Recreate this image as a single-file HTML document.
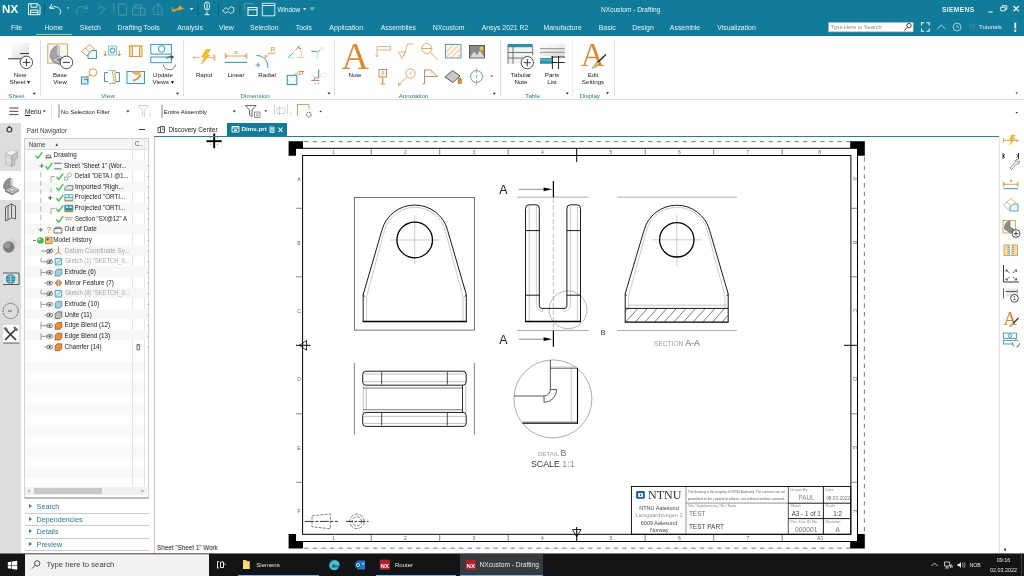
<!DOCTYPE html>
<html>
<head>
<meta charset="utf-8">
<title>NXcustom - Drafting</title>
<style>
html,body{margin:0;padding:0;}
#hdr,#ribbon,#selbar,#nav,#task,#tabs,#gfx,#topicons{will-change:transform;}
body{width:1024px;height:576px;overflow:hidden;background:#fefefe;font-family:"Liberation Sans",sans-serif;font-size:7px;color:#222;position:relative;}
.abs{position:absolute;}
#hdr{left:0;top:0;width:1024px;height:36px;background:#107c9a;}
#hdr .t{position:absolute;color:#e9f3f5;font-size:6.900px;white-space:nowrap;line-height:9px;}
#hdr .m{top:23.300px;transform:translateX(-50%);}
#ribbon{left:0;top:36px;width:1024px;height:63px;background:#fefefe;border-bottom:1px solid #d9dde0;}
#ribbon .l{position:absolute;margin-top:-1px;font-size:6.200px;color:#1c1c1c;white-space:nowrap;text-align:center;line-height:7px;}
#ribbon .g{position:absolute;font-size:6.200px;color:#257b90;white-space:nowrap;line-height:7px;}
#ribbon .sep{position:absolute;top:4px;width:1px;height:56px;background:#dcdfe2;}
#selbar{left:0;top:100px;width:1024px;height:23px;background:#fefefe;}
#selbar .t{position:absolute;font-size:6.6px;color:#222;white-space:nowrap;line-height:8px;}
#side{left:0;top:123px;width:21px;height:431px;background:#dcdddd;}
#nav{left:21px;top:123px;width:130px;height:431px;background:#fefefe;}
#gap{left:154.200px;top:136px;width:0.800px;height:418px;background:#c6c8c9;}
#nav .r{position:absolute;left:0;font-size:6.3px;color:#1c1c1c;white-space:nowrap;line-height:8px;}
#nav .gr{color:#a3a6a9;}
#task{left:0;top:554px;width:1024px;height:22px;background:#131416;}
#task .t{position:absolute;color:#e8e8e8;font-size:6.6px;white-space:nowrap;line-height:8px;}
</style>
</head>
<body>
<!-- HEADER -->
<div id="hdr" class="abs">
  <div class="t" style="left:2px;top:3px;font-size:11.5px;font-weight:bold;line-height:12px;color:#fff;letter-spacing:.3px;">NX</div>
  <div class="t" style="left:277.400px;top:4.600px;font-size:6.400px;">Window</div>
  <div class="t" style="left:601px;top:4.800px;font-size:6.600px;">NXcustom - Drafting</div>
  <div class="t" style="left:942px;top:5.200px;font-size:6.600px;font-weight:bold;letter-spacing:.4px;">SIEMENS</div>
  <div class="t m" style="left:16.6px;">File</div>
  <div class="t m" style="left:53.6px;">Home</div>
  <div class="t m" style="left:90.4px;">Sketch</div>
  <div class="t m" style="left:138.6px;">Drafting Tools</div>
  <div class="t m" style="left:190.0px;">Analysis</div>
  <div class="t m" style="left:226.4px;">View</div>
  <div class="t m" style="left:264.3px;">Selection</div>
  <div class="t m" style="left:303.8px;">Tools</div>
  <div class="t m" style="left:346.2px;">Application</div>
  <div class="t m" style="left:398.3px;">Assemblies</div>
  <div class="t m" style="left:448.6px;">NXcustom</div>
  <div class="t m" style="left:505.0px;">Ansys 2021 R2</div>
  <div class="t m" style="left:562.6px;">Manufacture</div>
  <div class="t m" style="left:607.2px;">Basic</div>
  <div class="t m" style="left:643.0px;">Design</div>
  <div class="t m" style="left:685.0px;">Assemble</div>
  <div class="t m" style="left:736.5px;">Visualization</div>
  <div class="t" style="left:979px;top:23px;font-size:6px;">Tutorials</div>
  <div class="abs" style="left:36px;top:33.700px;width:36px;height:1.200px;background:#a9cd72;"></div>
</div>

<!-- RIBBON -->
<div id="ribbon" class="abs">
  <div class="sep" style="left:40px;"></div>
  <div class="sep" style="left:183px;"></div>
  <div class="sep" style="left:334px;"></div>
  <div class="sep" style="left:500px;"></div>
  <div class="sep" style="left:572px;background:#eceef0;"></div>
  <div class="sep" style="left:613.500px;"></div>
  <div class="l" style="left:8px;top:36px;width:24px;">New<br>Sheet ▾</div>
  <div class="l" style="left:48px;top:36px;width:24px;">Base<br>View</div>
  <div class="l" style="left:148px;top:36px;width:30px;">Update<br>Views ▾</div>
  <div class="l" style="left:192px;top:36px;width:24px;">Rapid</div>
  <div class="l" style="left:224px;top:36px;width:24px;">Linear</div>
  <div class="l" style="left:255px;top:36px;width:24px;">Radial</div>
  <div class="l" style="left:343px;top:36px;width:24px;">Note</div>
  <div class="l" style="left:506px;top:36px;width:30px;">Tabular<br>Note</div>
  <div class="l" style="left:540px;top:36px;width:24px;">Parts<br>List</div>
  <div class="l" style="left:578px;top:36px;width:30px;">Edit<br>Settings</div>
  <div class="g" style="left:16.4px;top:55.800px;transform:translateX(-50%);">Sheet</div>
  <div class="g" style="left:108.0px;top:55.800px;transform:translateX(-50%);">View</div>
  <div class="g" style="left:255.2px;top:55.800px;transform:translateX(-50%);">Dimension</div>
  <div class="g" style="left:413.5px;top:55.800px;transform:translateX(-50%);">Annotation</div>
  <div class="g" style="left:532.7px;top:55.800px;transform:translateX(-50%);">Table</div>
  <div class="g" style="left:589.8px;top:55.800px;transform:translateX(-50%);">Display</div>
</div>

<!-- SELECTION BAR -->
<div id="selbar" class="abs">
  <div class="t" style="left:24.900px;top:7.500px;"><span style="text-decoration:underline;">M</span>enu</div>
  <div class="t" style="left:60.800px;top:7.500px;font-size:6px;">No Selection Filter</div>
  <div class="t" style="left:163.800px;top:7.500px;font-size:6px;">Entire Assembly</div>
</div>

<!--TOP-->
<svg id="topicons" class="abs" style="left:0;top:0;" width="1024" height="124" viewBox="0 0 1024 124" font-family="Liberation Sans, sans-serif">
<!-- quick access -->
<g fill="none" stroke="#f2f8f9" stroke-width="1">
<path d="M28.500 3.700h9l2.500 2.500v8.500h-11.500z"/><path d="M31 3.700v3.500h6v-3.500M30.500 14.500v-4.500h7.500v4.500M30.500 12.300h7.500"/>
<path d="M52 3.800l-2.500 4.300 4.800.7M49.700 8.100c5-3 10-1 11 3 .3 1.500-.5 2.700-1.500 3.500" stroke-width="0.900"/>
<path d="M207 3.500v5.500M204.500 4.500v3a2.500 2.500 0 0 0 5 0v-3a2.500 2.500 0 0 0-5 0zM207 11.500v3M204.500 14.700h5" stroke-width="1"/>
<path d="M222.500 11l3-3.500 3 2 2-3 3.500 1.500-.5 4-3 1.500-2-2-3 1.500z" stroke-width="0.800"/>
<path d="M248 7.500h9v8h-9zM248 9.700h9" stroke-width="1.100"/><path d="M244.500 10v-6.500h8.500v2" stroke="#5d9fb0" stroke-width="0.800"/>
<path d="M262.300 3.300h12.500v12.500h-12.500zM262.300 5.500h12.500" stroke-width="0.900"/>
</g>
<path d="M44.300 3v13M197.800 3v13M218.500 3v13M240 3v13" stroke="#13596a" stroke-width="0.800"/>
<path d="M66.800 7.500h2.400l-1.200 1.500zM189.800 8h3.600l-1.800 2.200zM303 8h3.400l-1.700 2.200z" fill="#e9f3f5"/>
<path d="M310.500 7.800h3.400l-1.700 2.400z" fill="none" stroke="#e9f3f5" stroke-width="0.600"/>
<g fill="none" stroke="#4b98a9" stroke-width="1">
<path d="M86.500 4.500l1 4-4 .5M86.500 8c-4-3-9-1-10 3-.3 1.500.5 2.700 1.500 3.500"/>
<path d="M98 9l4-3 2 4 3.500-3M101 14l2-4"/>
<path d="M114 3v10M118.500 4h5.500l2.500 2.500v8.500h-8z"/>
<path d="M132.500 8v7h8v-7zM134.500 8v-3h6.500v3M141 8h4v7h-4.500"/>
<path d="M158 3v12M153 8l5-4.500 4 5.500v5.500h-8z" stroke-width="0.900"/>
</g>
<path d="M172.300 9.500l5-1 3-3.500 1.500 2.500 2.500.5-3 2-5 .5-2.500 1.500z" fill="#e29a2b"/><path d="M172.300 7v5" stroke="#e29a2b" stroke-width="0.900"/>
<!-- header right -->
<rect x="828.400" y="22.300" width="84.800" height="9.600" fill="#fefefe" stroke="#9aa6ab" stroke-width="0.600"/>
<text x="830.400" y="29" font-size="5.600" fill="#8a8f92">Type Here to Search</text>
<g fill="none" stroke="#333" stroke-width="0.900"><circle cx="909" cy="25.600" r="2.200"/><path d="M907.400 27.300l-3 3.300"/></g>
<g fill="none" stroke="#eef6f7" stroke-width="1">
<path d="M921.500 25.500v-2.700h2.700M926.500 22.800h2.700v2.700M929.200 28.500v2.700h-2.700M924.200 31.200h-2.700v-2.700" stroke-width="1.100"/>
<path d="M937.300 29l4-3.800 4 3.800" stroke="#b9d6dc" stroke-width="0.900"/>
<circle cx="957" cy="27" r="3.900" stroke="#cfe3e7" stroke-width="0.800"/><path d="M957 24.800v2.400h1.800" stroke="#cfe3e7" stroke-width="0.700"/>
<path d="M969.500 25.500l3-1.500 3 1.500-3 1.500zM970.500 27v2l2 1 2-1v-2" stroke="#3c8b9d" stroke-width="0.800"/>
<path d="M988.500 12h4.200" stroke-width="1.100"/>
<path d="M1000.700 7.300h4.500v3.500h-4.500zM1002.200 7.300v-1.600h4.600v3.600h-1.600" stroke-width="0.900"/>
<path d="M1013.500 6l5.400 5.400M1018.900 6l-5.400 5.400" stroke-width="1.300"/>
</g>
<path d="M1014.400 22.800h1.800v5.600h-1.800zM1014.400 29.800h1.800v2.100h-1.800z" fill="#fefefe"/>

<!-- RIBBON ICONS -->
<!-- New Sheet -->
<defs><linearGradient id="gsh" x1="0" y1="0" x2="1" y2="1"><stop offset="0" stop-color="#fefefe"/><stop offset="1" stop-color="#dcdcdc"/></linearGradient></defs>
<rect x="12" y="43" width="17" height="15.500" fill="url(#gsh)"/>
<path d="M8 58.800h13.500M20 53.500h9" stroke="#222" stroke-width="0.900"/>
<circle cx="26.400" cy="62.400" r="6.200" fill="#fefefe" stroke="#222" stroke-width="0.800"/><path d="M22.800 62.400h7.200M26.400 58.800v7.200" stroke="#222" stroke-width="0.900"/>
<!-- Base View -->
<rect x="47.800" y="43.900" width="19.800" height="19.300" fill="#fbf7ef" stroke="#c99a4a" stroke-width="0.800"/>
<path d="M50 57.500c0-6.500 2.800-11 7.500-12l2 1v9.500l-7.500 4z" fill="#a6a6a6" stroke="#6e6e6e" stroke-width="0.500"/><path d="M57.500 45.500l2 1v9.500l-2-1z" fill="#d9d9d9"/><path d="M52 60l7.500-4 7 3.500-7.500 4z" fill="#cdcdcd" stroke="#777" stroke-width="0.500"/><path d="M52 60l7 3.500v1.600l-7-3.500z" fill="#8a8a8a"/><path d="M59 63.500l7.500-4v1.600l-7.500 4z" fill="#9d9d9d"/><ellipse cx="59.600" cy="59.800" rx="2.600" ry="1.400" fill="#8c8c8c" stroke="#666" stroke-width="0.400"/>
<circle cx="66.400" cy="62.400" r="6.300" fill="#fefefe" stroke="#222" stroke-width="0.800"/><path d="M62.800 62.400h7.200" stroke="#222" stroke-width="0.900"/>
<!-- small view icons -->
<g fill="none" stroke-width="0.900">
<path d="M81.500 51.500l8-7 5 4.500-7.500 7z" stroke="#d9933d"/><path d="M85 48l5 4.500" stroke="#d9933d"/><path d="M88 58.500v-4.500l4-3.500h4.500v8z" stroke="#2f8fa6" fill="#eef8fa"/>
<rect x="108.500" y="46" width="8" height="9" stroke="#6fc3d4" fill="#eef8fa"/><circle cx="112.500" cy="50.500" r="2.400" stroke="#2f8fa6"/><path d="M105.300 50.800v5M119.300 50.800v5M104 54l1.300 2 1.300-2M118 54l1.300 2 1.300-2" stroke="#c98744"/>
<rect x="129.500" y="46" width="12.500" height="10.500" stroke="#d9933d" fill="#f5dcae"/><path d="M134 46v10.500M138 46v10.500" stroke="#fefefe" stroke-width="3.400"/><path d="M129.500 46h12.500M129.500 56.500h12.500M132.500 46v10.500M139.500 46v10.500" stroke="#d9933d"/>
<rect x="81.500" y="77" width="6.500" height="7" stroke="#2f8fa6" fill="#c9edf3"/><circle cx="93" cy="72.500" r="3.800" stroke="#d9933d"/><path d="M85 78l5.500-3.500" stroke="#d9933d"/><path d="M84 79.500h3.500v2" stroke="#2f8fa6"/>
<path d="M108 72.500h-3.500v9h3.500M116 72.500h3.500v9h-3.500" stroke="#2f8fa6"/><path d="M109 70.500h6.500M109 83.500h6.500" stroke="#6fc3d4"/><path d="M113.500 70.500c-3 4 3 8-1 13M116 71c-3 4 2 8-1.500 12.500" stroke="#d9933d"/>
<rect x="127" y="71.500" width="17.500" height="12" stroke="#2f8fa6" fill="#eef8fa"/><path d="M132 71.500a5 5 0 0 0 9 0z" fill="#e9b674" stroke="#d9933d"/><path d="M133 80.500c3-.5 6-2 7.500-6" stroke="#d9933d" stroke-width="1.800"/>
</g>
<!-- Update Views -->
<g fill="none" stroke="#2f8fa6" stroke-width="0.900">
<rect x="150.800" y="44.400" width="20.600" height="9.700" fill="#f3fbfc"/><rect x="150.800" y="57" width="20.600" height="5.700" fill="#f3fbfc"/><circle cx="161.600" cy="49" r="3.300"/>
</g>
<path d="M163.200 64.500a6.300 6.300 0 0 0 12.400 0" fill="none" stroke="#444" stroke-width="0.700"/><path d="M166.500 58.500c2-1.800 4.500-2.200 6.500-1.500" fill="none" stroke="#222" stroke-width="0.900"/><path d="M170.500 55.200l3 1.800-2.800 1.800" fill="none" stroke="#222" stroke-width="0.900"/>
<!-- Rapid -->
<path d="M206 49.500h4.500l-3.500 5.500h3l-8.500 9 3-7h-3z" fill="#ecc12e" stroke="#d9a11e" stroke-width="0.500"/>
<path d="M193.500 57.500h6M208 57.500h6.500M194.800 55.800l-1.700 1.700 1.700 1.700M213 54.800l1.800 2.700-1.800 2.700M214.800 54v7" fill="none" stroke="#e0a25c" stroke-width="0.800"/>
<!-- Linear -->
<path d="M225.300 56h21.500M225.300 53v6M246.800 53v6M227.300 54.300l-1.700 1.700 1.700 1.700M244.800 54.300l1.700 1.700-1.700 1.700M234.500 51l3 3M237.500 51l-3 3" fill="none" stroke="#d9933d" stroke-width="0.800"/>
<path d="M225 62.400h22" stroke="#2f8fa6" stroke-width="1"/>
<!-- Radial -->
<path d="M256.500 55.500c7 0 11.500 5 11.500 12.500" fill="none" stroke="#2f8fa6" stroke-width="0.900"/><path d="M255.500 65h5M258 62.500v5" stroke="#2f8fa6" stroke-width="0.800"/>
<path d="M275.500 53.300h-6.500l-4 4M265 54.800v2.500h2.500" fill="none" stroke="#d9933d" stroke-width="0.800"/>
<text x="270.500" y="52.200" font-size="7" fill="#d9933d">R</text>
<!-- small dimension icons -->
<g fill="none" stroke-width="0.800">
<path d="M287.900 57.800l5.600-5.200" stroke="#2f8fa6"/><path d="M288.500 57.800h6.500" stroke="#a9e3ee"/>
<path d="M295.300 50.400l4.700-4.800M298.200 46l1 2.400 2 .2" stroke="#b8692a"/><path d="M300.400 49.500c1 2 1.400 4.500 1.300 7" stroke="#d9933d" stroke-dasharray="1 0.800"/><path d="M297 57.400h7" stroke="#e7b27a"/>
<path d="M311.300 51.300h5.700" stroke="#2f8fa6" stroke-width="0.900"/><path d="M317.400 52.500v6.200" stroke="#b5e8f0" stroke-width="1"/><path d="M317 52.600l3-2.600" stroke="#c98744" stroke-width="0.900"/><path d="M321.800 47l-1.200 2.400h2.400z" stroke="#f0cf9f" stroke-width="0.600"/>
<rect x="287.300" y="75.300" width="9.600" height="9.300" stroke="#2f8fa6" stroke-width="1"/><circle cx="292.100" cy="80" r="2.900" stroke="#8fd9e6" stroke-dasharray="1.600 0.800"/><path d="M293.100 75.600l4.800-3" stroke="#d9933d"/>
<path d="M318.700 69.500v8.300" stroke="#2f8fa6" stroke-width="1"/><path d="M311.300 80.400h8" stroke="#a8713a" stroke-width="0.900"/><path d="M314.400 80.400v-2.600h4.300" stroke="#a8713a"/><path d="M311.500 73.500l2 3.500h3" stroke="#b5e8f0"/><path d="M321 74v3.500M323.500 73.500h2.500M323.500 77h2.500" stroke="#f0cf9f"/><path d="M314.600 83.400h1.300M317.800 83.400h1.300" stroke="#b07a3c" stroke-width="0.900"/>
</g>
<text x="298.200" y="74.800" font-size="5.800" font-weight="bold" fill="#c0742c" textLength="6" lengthAdjust="spacingAndGlyphs">ZT</text>
<!-- Note big A -->
<text x="355.200" y="69" font-size="38" font-family="Liberation Serif, serif" fill="#dc8a35" text-anchor="middle">A</text>
<!-- annotation small icons -->
<g fill="none" stroke-width="0.800">
<path d="M377 56.500v-10h13.500v3.500h-13.500M375.700 55l1.300 2 1.300-2" stroke="#e0a25c"/>
<path d="M398.500 52h7l-3.500 6.500zM404 56l3.500-12h6" stroke="#e0a25c"/>
<circle cx="426.800" cy="48.500" r="5" stroke="#d9933d"/><path d="M422 48.500h9.600M430.500 52.500l7 7" stroke="#d9933d"/>
<rect x="445.500" y="44.500" width="15.500" height="13.500" stroke="#2f8fa6" fill="#fdf5ea"/><path d="M446 52l7-7M446 57.500l13-13M451 58l10-10M457 58l4-4" stroke="#e3a978"/>
<rect x="469.500" y="45.500" width="15" height="12.500" fill="#8a8a8a" stroke="#444"/><path d="M470 57.500l4-6 3 3.500 3-4.500 4.500 7z" fill="#d8d8d8" stroke="none"/><circle cx="481.500" cy="48.500" r="1.900" fill="#f2c833" stroke="none"/>
<rect x="379" y="69.500" width="7.500" height="7.500" stroke="#b07a3c"/><path d="M382.800 71v4.500M381.300 75.500l1.500-4.500 1.500 4.500" stroke="#e0a25c" stroke-width="0.600"/><path d="M382.800 77v6.500M380.500 84h4.600" stroke="#d9933d" stroke-width="1.200"/>
<circle cx="410.500" cy="73.500" r="4.600" stroke="#d9933d"/><path d="M407 77l-8.500 8M398.500 82.500v2.500h2.500" stroke="#d9933d"/><path d="M409.800 75.500l1.500-4" stroke="#d9933d" stroke-width="0.600"/>
<path d="M424.500 84v-14.500M424.500 70h6l7 6.500h-13M422.500 84.500l2-2" stroke="#b8743a"/><path d="M430 72l3.500 3" stroke="#e9c7a2"/>
<path d="M445 77l7.500-6.500 7.500 5.500-7 6.500z" fill="#c9c9c9" stroke="#333"/><path d="M458 79.500h3.500v4h-3.500zM458.800 79.500v-1.500h2v1.500" fill="#e0913a" stroke="#c26f1d" stroke-width="0.600"/>
<circle cx="476.500" cy="76.500" r="6" stroke="#2f8fa6"/><path d="M476.500 68v5M476.500 75v3M476.500 80v5" stroke="#d9933d"/><path d="M468.500 76.500h3M481.500 76.500h3.500" stroke="#9fdbe6"/>
</g>
<!-- Tabular Note -->
<rect x="508" y="44" width="24.700" height="19.800" fill="#f1f1f1"/><rect x="508" y="44" width="24.700" height="3.200" fill="#2f8fa6"/>
<path d="M508 44v19.800M513 47v16.800M508 52.500h24.700M508 58h16M532.700 47v8" fill="none" stroke="#555" stroke-width="0.800"/>
<circle cx="527.300" cy="62.700" r="6.200" fill="#fefefe" stroke="#222" stroke-width="0.800"/><path d="M523.700 62.700h7.200M527.300 59.100v7.200" stroke="#222" stroke-width="0.900"/>
<!-- Parts List -->
<rect x="540" y="44" width="24.700" height="12" fill="url(#gsh)"/><path d="M540 48.700h24.700M540 52.300h24.700" stroke="#666" stroke-width="0.700"/>
<rect x="540" y="58" width="12.400" height="5.800" fill="#2f8fa6"/><path d="M540 60h12" stroke="#7cc4d2" stroke-width="1"/>
<path d="M552.400 56v13M558.600 56v13M551 57h14M552.400 62.500h12.300" fill="none" stroke="#111" stroke-width="0.900"/>
<!-- Edit Settings -->
<text x="592.600" y="65.500" font-size="33" font-family="Liberation Serif, serif" fill="#dc8a35" text-anchor="middle">A</text>
<path d="M606 54.500l-9.500 9" stroke="#222" stroke-width="1.300"/><path d="M598 62l-3.500 2.500-2.500 4 4.500-1.500 2.800-3.500z" fill="#e8c23a" stroke="#7a8fb8" stroke-width="0.500"/>
<!-- group arrows -->
<path d="M32.800 92.700h3l-1.500 2zM176 92.700h3l-1.500 2zM327.500 92.500h3l-1.500 2zM492.800 92.700h3l-1.500 2zM565.800 92.500h3l-1.500 2zM606 92.300h3l-1.500 2zM1015.500 92.500h2.400l-1.200 1.600zM1015.500 112h2.400l-1.200 1.600z" fill="#222"/>
<path d="M490.800 76h2" stroke="#222" stroke-width="0.900"/>

<!-- SELECTION BAR ICONS -->
<path d="M9.300 108h9M9.300 111.300h9M9.300 114.600h9" stroke="#333" stroke-width="0.900"/>
<path d="M42.800 110.500h2.800l-1.400 1.800zM126.400 110.600h3l-1.500 1.900zM232.700 110.600h3l-1.500 1.900zM264.500 110.300h2.600l-1.300 1.700z" fill="#222"/>
<path d="M51.500 104v15" stroke="#d5d8da" stroke-width="0.800"/>
<path d="M59 104.500v13.500M162 104.500v13.500" stroke="#555" stroke-width="0.700"/>
<path d="M138.500 105.500h10l-4 5v6l-2-1.500v-4.500z" fill="none" stroke="#c4c7c9" stroke-width="0.800"/><path d="M149 113.500c1.500.5 2 2 .5 3" fill="none" stroke="#c4c7c9" stroke-width="0.700"/>
<path d="M245.500 105.500h10.500l-4 4.500v6.500l-2.500-1.500v-5z" fill="none" stroke="#444" stroke-width="0.800"/><path d="M254.500 112h5.500v5.500h-5.500zM256 114h2.500M256 115.800h2.500" fill="none" stroke="#444" stroke-width="0.600"/>
<path d="M274.500 104.500v10M287.500 104.500v10M277 108h8v5.500h-8zM279.500 106v9.500" fill="none" stroke="#c9ccce" stroke-width="0.800"/><path d="M289.500 112c1.500.5 2 2.500.5 3.500" fill="none" stroke="#c4c7c9" stroke-width="0.700"/>
<path d="M297.500 116v-11.500h11.500v5" fill="none" stroke="#c98a3a" stroke-width="0.800"/><circle cx="308.800" cy="114.600" r="2.400" fill="none" stroke="#333" stroke-width="0.800" stroke-dasharray="1.800 0.800"/>
<path d="M319.800 111.500h1.600" stroke="#222" stroke-width="1.200"/>
</svg>
<!--/TOP-->
<!-- LEFT -->
<div id="side" class="abs">
<div class="abs" style="left:0;top:48.300px;width:21px;height:28.500px;background:#fefefe;"></div>
<svg class="abs" style="left:0;top:0" width="21" height="429" viewBox="0 123 21 429">
<!-- gear -->
<circle cx="9.4" cy="129.6" r="2.4" fill="none" stroke="#333" stroke-width="1.1"/><path d="M9.4 125.8v1.6" stroke="#333" stroke-width="1.2"/>
<!-- 3d block -->
<path d="M5.500 153.500l6.500-4 5.500 2.500-6.500 4z" fill="#f1f1f1" stroke="#a5a5a5" stroke-width="0.500"/><path d="M5.500 153.500l6 2.500v10.500l-6-2.500z" fill="#d9d9d9" stroke="#a5a5a5" stroke-width="0.500"/><path d="M11.500 156l6-4v6l-2.800 1.800v5l-3.200 1.700z" fill="#c2c2c2" stroke="#999" stroke-width="0.500"/><path d="M5.500 158.500l6 2.500" stroke="#f4f4f4" stroke-width="0.700"/>
<!-- selected: bracket part -->
<path d="M3.500 188c0-5.500 2.500-9 7-10l1.500 .8v8l-6 3.200z" fill="#8f8f8f" stroke="#555" stroke-width="0.500"/><path d="M10.500 178l1.500 .8v8l-1.500-.8z" fill="#d0d0d0"/><path d="M5 190l7-3.800 7 3.500-7 4z" fill="#c9c9c9" stroke="#666" stroke-width="0.500"/><path d="M5 190l7 3.700v1.600l-7-3.700z" fill="#777"/><path d="M12 193.700l7-4v1.600l-7 4z" fill="#909090"/><ellipse cx="12" cy="190" rx="2.700" ry="1.400" fill="#e6e6e6" stroke="#666" stroke-width="0.500"/>
<!-- book-like -->
<path d="M5.5 207l6-3v14l-6 3zM11.500 204l4 2v13l-4-1M8 206v14" fill="none" stroke="#555" stroke-width="0.9"/>
<!-- sphere with waves -->
<circle cx="8.800" cy="247" r="5.700" fill="#7b7b7b"/><circle cx="7.500" cy="245.500" r="3" fill="#9a9a9a"/><path d="M11 238.500a9 9 0 0 1 6 6M12 240.600a6.500 6.500 0 0 1 3.600 3.600" fill="none" stroke="#bdbdbd" stroke-width="0.7"/>
<!-- globe box -->
<path d="M3 273h16v11.500h-16" fill="#dfe3e4" stroke="#333" stroke-width="0.8"/><circle cx="10.600" cy="279" r="4.800" fill="#2e8ea6"/><path d="M6.500 279h8.200M10.600 274.500v9M8 276c2 1.200 3.400 1.200 5.400 0M8 282c2-1.200 3.400-1.200 5.400 0" stroke="#bfe4ec" stroke-width="0.7" fill="none"/>
<!-- clock -->
<circle cx="10.600" cy="311" r="7.600" fill="none" stroke="#444" stroke-width="0.7" stroke-dasharray="2.400 0.800"/><path d="M8 311h4" stroke="#444" stroke-width="0.8"/>
<!-- tools -->
<rect x="3.300" y="325" width="16" height="18" fill="#fefefe"/><path d="M5 329l11 11M16 329l-11 11" stroke="#333" stroke-width="1.700"/><path d="M4.500 327.500l3 3M14 327l3.500 3.500" stroke="#666" stroke-width="2.200"/><path d="M3.300 343h16" stroke="#333" stroke-width="0.800"/>
</svg>
</div>
<div id="nav" class="abs">
<!--NAV-->
<div class="abs" style="left:4.200px;top:238.7px;width:122px;height:10.600px;background:#f8f9f9;"></div>
<div class="abs" style="left:4.200px;top:259.9px;width:122px;height:10.600px;background:#f8f9f9;"></div>
<div class="abs" style="left:4.200px;top:281.1px;width:122px;height:10.600px;background:#f8f9f9;"></div>
<div class="abs" style="left:4.200px;top:302.3px;width:122px;height:10.600px;background:#f8f9f9;"></div>
<div class="abs" style="left:4.200px;top:323.5px;width:122px;height:10.600px;background:#f8f9f9;"></div>
<div class="abs" style="left:4.200px;top:344.7px;width:122px;height:10.600px;background:#f8f9f9;"></div>
<div class="r" style="left:5.7px;top:4.0px;color:#444;">Part Navigator</div>
<div class="abs" style="left:118.0px;top:6.0px;width:6px;height:1px;background:#333;"></div>
<div class="abs" style="left:3.2px;top:15.3px;width:123px;height:358px;border:1px solid #cfd2d4;border-bottom:2px solid #b9bcbe;"></div>
<div class="abs" style="left:4.2px;top:16.3px;width:123px;height:10px;background:#f3f4f4;border-bottom:1px solid #dcdfe0;"></div>
<div class="abs" style="left:110.6px;top:16.3px;width:1px;height:347px;background:#e3e5e6;"></div>
<div class="abs" style="left:122.6px;top:16.3px;width:1px;height:347px;background:#e3e5e6;"></div>
<div class="r" style="left:7.800px;top:18.200px;color:#444;">Name</div>
<div class="r" style="left:33.5px;top:18.0px;color:#444;font-size:4.6px;">▲</div>
<div class="r" style="left:113.8px;top:17.4px;color:#555;">C..</div>
<div class="abs" style="left:4.2px;top:37.3px;width:122px;height:10.6px;background:#f6f7f7;"></div>
<div class="abs" style="left:4.2px;top:58.5px;width:122px;height:10.6px;background:#f6f7f7;"></div>
<div class="abs" style="left:4.2px;top:79.7px;width:122px;height:10.6px;background:#f6f7f7;"></div>
<div class="abs" style="left:4.2px;top:100.9px;width:122px;height:10.6px;background:#f6f7f7;"></div>
<div class="abs" style="left:4.2px;top:122.1px;width:122px;height:10.6px;background:#f6f7f7;"></div>
<div class="abs" style="left:4.2px;top:143.3px;width:122px;height:10.6px;background:#f6f7f7;"></div>
<div class="abs" style="left:4.2px;top:164.5px;width:122px;height:10.6px;background:#f6f7f7;"></div>
<div class="abs" style="left:4.2px;top:185.7px;width:122px;height:10.6px;background:#f6f7f7;"></div>
<div class="abs" style="left:4.2px;top:206.9px;width:122px;height:10.6px;background:#f6f7f7;"></div>
<div class="r" style="left:32.6px;top:27.8px;">Drawing</div>
<div class="r" style="left:42.5px;top:38.5px;transform:scaleX(0.968);transform-origin:0 0;">Sheet "Sheet 1" (Wor...</div>
<div class="r" style="left:53.6px;top:49.1px;transform:scaleX(0.942);transform-origin:0 0;">Detail "DETA.I @1...</div>
<div class="r" style="left:54.4px;top:59.8px;transform:scaleX(1.04);transform-origin:0 0;">Imported "Righ...</div>
<div class="r" style="left:53.6px;top:70.4px;">Projected "ORTI...</div>
<div class="r" style="left:53.6px;top:81.1px;">Projected "ORTI...</div>
<div class="r" style="left:53.6px;top:91.7px;transform:scaleX(0.95);transform-origin:0 0;">Section "SX@12" A</div>
<div class="r" style="left:43.6px;top:102.4px;">Out of Date</div>
<div class="r" style="left:32.3px;top:113.0px;">Model History</div>
<div class="r gr" style="left:43.6px;top:123.7px;">Datum Coordinate Sy...</div>
<div class="r gr" style="left:43.6px;top:134.4px;transform:scaleX(0.916);transform-origin:0 0;">Sketch (1) "SKETCH_0...</div>
<div class="r" style="left:43.6px;top:145.0px;">Extrude (6)</div>
<div class="r" style="left:43.6px;top:155.7px;">Mirror Feature (7)</div>
<div class="r gr" style="left:43.6px;top:166.3px;transform:scaleX(0.916);transform-origin:0 0;">Sketch (8) "SKETCH_0...</div>
<div class="r" style="left:43.6px;top:177.0px;">Extrude (10)</div>
<div class="r" style="left:43.6px;top:187.6px;">Unite (11)</div>
<div class="r" style="left:43.6px;top:198.3px;">Edge Blend (12)</div>
<div class="r" style="left:43.6px;top:208.9px;">Edge Blend (13)</div>
<div class="r" style="left:43.6px;top:219.6px;">Chamfer (14)</div>
<svg class="abs" style="left:0;top:0;" width="130" height="429" viewBox="21 123 130 429"><g transform="translate(0,155.200) scale(1,1.00528) translate(0,-155)"><path d="M35.6 155.4l2.2 2.6l4.6-6" fill="none" stroke="#3cc240" stroke-width="1.300"/><path d="M45 157.6h7M46.5 157.4h4v-2.4h-4z" fill="#e8e8e8" stroke="#555" stroke-width="0.7"/><path d="M39.5 165.6h4.4M41.7 163.4v4.4" stroke="#444" stroke-width="0.7"/><path d="M45.6 166.0l2.2 2.6l4.6-6" fill="none" stroke="#3cc240" stroke-width="1.300"/><path d="M54.2 163.0h7.4M54.2 168.6h7.4" fill="none" stroke="#444" stroke-width="0.8"/><path d="M56.4 176.6l2.2 2.6l4.6-6" fill="none" stroke="#3cc240" stroke-width="1.300"/><circle cx="69.5" cy="174.6" r="2" fill="none" stroke="#d08a2c" stroke-width="0.7"/><path d="M64.6 176.7h3v3h-3z" fill="none" stroke="#3d8fa0" stroke-width="0.6"/><path d="M56.4 187.2l2.2 2.6l4.6-6" fill="none" stroke="#3cc240" stroke-width="1.300"/><path d="M64.8 189.8h8v-4.6h-5l-3 2z" fill="#e4e4e4" stroke="#555" stroke-width="0.7"/><path d="M56.4 197.8l2.2 2.6l4.6-6" fill="none" stroke="#3cc240" stroke-width="1.300"/><path d="M64.8 194.2h8v6.4h-8zM64.8 197.2h8M68.8 194.2v3" fill="#dff0f4" stroke="#2f8fa6" stroke-width="0.7"/><path d="M64.8 200.0h8" stroke="#d9933d" stroke-width="1.2"/><path d="M56.4 208.4l2.2 2.6l4.6-6" fill="none" stroke="#3cc240" stroke-width="1.300"/><path d="M64.8 204.8h8v6.4h-8z" fill="#2f8fa6" stroke="#2f8fa6" stroke-width="0.7"/><path d="M66 205.8h2.2v1.6h-2.2zM69.4 205.8h2.2v1.6h-2.2z" fill="#dff0f4"/><path d="M64.8 210.4h8" stroke="#d9933d" stroke-width="1.4"/><path d="M56.4 219.0l2.2 2.6l4.6-6" fill="none" stroke="#3cc240" stroke-width="1.300"/><path d="M64.8 217.2h8" stroke="#d9933d" stroke-width="1"/><path d="M66 219.2h5.5" stroke="#3d8fa0" stroke-width="1" stroke-dasharray="1.4 0.8"/><path d="M38.6 229.2h4.4M40.8 227.0v4.4" stroke="#444" stroke-width="0.7"/><text x="46.6" y="232.2" font-size="8.4" fill="#e0962e" font-family="Liberation Sans, sans-serif">?</text><path d="M54 232.4h8v-4.4h-8zM55.6 228.0v-1.4h4.8v1.4" fill="none" stroke="#444" stroke-width="0.7"/><path d="M33 239.8h3" stroke="#444" stroke-width="0.7"/><circle cx="40.4" cy="239.8" r="3.3" fill="#43b649"/><circle cx="39.4" cy="238.7" r="1.2" fill="#b7e6b3"/><path d="M45.4 236.6h6.6v6.4h-6.6z" fill="#f1c27a" stroke="#a2601c" stroke-width="0.7"/><path d="M46.6 237.8h2v2h-2z" fill="#7a4a1a"/><path d="M44 250.4h4" stroke="#888" stroke-width="0.6"/><ellipse cx="49.6" cy="250.4" rx="3.1" ry="1.9" fill="none" stroke="#444" stroke-width="0.7"/><circle cx="49.6" cy="250.4" r="1" fill="#333"/><path d="M47 253.1l5.4-5.4" stroke="#444" stroke-width="0.7"/><path d="M58.4 251.4v-5.6M58.4 251.4l-3 2.2M58.4 251.4l3 2.2" stroke="#d9772a" stroke-width="0.9" fill="none"/><path d="M44 261.0h4" stroke="#888" stroke-width="0.6"/><ellipse cx="49.6" cy="261.0" rx="3.1" ry="1.9" fill="none" stroke="#444" stroke-width="0.7"/><circle cx="49.6" cy="261.0" r="1" fill="#333"/><path d="M47 263.7l5.4-5.4" stroke="#444" stroke-width="0.7"/><path d="M55.2 257.8h6.4v6.4h-6.4z" fill="#d7eef3" stroke="#2f8fa6" stroke-width="0.8"/><path d="M56.6 263.0l3.6-3.6" stroke="#2f8fa6" stroke-width="0.8"/><path d="M44 271.6h4" stroke="#888" stroke-width="0.6"/><ellipse cx="49.6" cy="271.6" rx="3.1" ry="1.9" fill="none" stroke="#444" stroke-width="0.7"/><circle cx="49.6" cy="271.6" r="1" fill="#333"/><path d="M55.2 270.4l2-2h4.6v4.8l-2 2h-4.6z" fill="#9fd0da" stroke="#2f7f92" stroke-width="0.7"/><path d="M44 282.2h4" stroke="#888" stroke-width="0.6"/><ellipse cx="49.6" cy="282.2" rx="3.1" ry="1.9" fill="none" stroke="#444" stroke-width="0.7"/><circle cx="49.6" cy="282.2" r="1" fill="#333"/><path d="M55.2 282.2l2.6-3.4v6.6zM61.8 282.2l-2.6-3.4v6.6z" fill="#e58a2e" stroke="#b5641a" stroke-width="0.5"/><path d="M44 292.8h4" stroke="#888" stroke-width="0.6"/><ellipse cx="49.6" cy="292.8" rx="3.1" ry="1.9" fill="none" stroke="#444" stroke-width="0.7"/><circle cx="49.6" cy="292.8" r="1" fill="#333"/><path d="M47 295.5l5.4-5.4" stroke="#444" stroke-width="0.7"/><path d="M55.2 289.6h6.4v6.4h-6.4z" fill="#d7eef3" stroke="#2f8fa6" stroke-width="0.8"/><path d="M56.6 294.8l3.6-3.6" stroke="#2f8fa6" stroke-width="0.8"/><path d="M44 303.4h4" stroke="#888" stroke-width="0.6"/><ellipse cx="49.6" cy="303.4" rx="3.1" ry="1.9" fill="none" stroke="#444" stroke-width="0.7"/><circle cx="49.6" cy="303.4" r="1" fill="#333"/><path d="M55.2 302.2l2-2h4.6v4.8l-2 2h-4.6z" fill="#9fd0da" stroke="#2f7f92" stroke-width="0.7"/><path d="M44 314.0h4" stroke="#888" stroke-width="0.6"/><ellipse cx="49.6" cy="314.0" rx="3.1" ry="1.9" fill="none" stroke="#444" stroke-width="0.7"/><circle cx="49.6" cy="314.0" r="1" fill="#333"/><path d="M55.2 312.8l2-2h4.6v4.8l-2 2h-4.6z" fill="#bdbdbd" stroke="#555" stroke-width="0.7"/><path d="M44 324.6h4" stroke="#888" stroke-width="0.6"/><ellipse cx="49.6" cy="324.6" rx="3.1" ry="1.9" fill="none" stroke="#444" stroke-width="0.7"/><circle cx="49.6" cy="324.6" r="1" fill="#333"/><path d="M55.2 323.4l2-2h4.6v4.8l-2 2h-4.6z" fill="#e9913a" stroke="#8a4a14" stroke-width="0.7"/><path d="M44 335.2h4" stroke="#888" stroke-width="0.6"/><ellipse cx="49.6" cy="335.2" rx="3.1" ry="1.9" fill="none" stroke="#444" stroke-width="0.7"/><circle cx="49.6" cy="335.2" r="1" fill="#333"/><path d="M55.2 334.0l2-2h4.6v4.8l-2 2h-4.6z" fill="#e9913a" stroke="#8a4a14" stroke-width="0.7"/><path d="M44 345.8h4" stroke="#888" stroke-width="0.6"/><ellipse cx="49.6" cy="345.8" rx="3.1" ry="1.9" fill="none" stroke="#444" stroke-width="0.7"/><circle cx="49.6" cy="345.8" r="1" fill="#333"/><path d="M55.2 344.6l2-2h4.6v4.8l-2 2h-4.6z" fill="#e9913a" stroke="#8a4a14" stroke-width="0.7"/><path d="M40.800 172v52" stroke="#8a8a8a" stroke-width="0.600" stroke-dasharray="5 3.500" fill="none"/><path d="M51 182v-5.800h4M51 213.800v-5.800h4M51 188v4" stroke="#777" stroke-width="0.600" fill="none"/><path d="M48 197.400h4.400M50.200 195.200v4.400" stroke="#222" stroke-width="0.700" fill="none"/><path d="M41 250.400h4M41 261v-4M41 261h4M41 271.600h4M41 268v7M41 292.800v-4M41 292.800h4M41 303.400h4M41 300v7M41 324.600h4M41 321v7M41 335.200h4M41 332v7" stroke="#666" stroke-width="0.600" fill="none"/><path d="M147.4 165.6h1.4" stroke="#999" stroke-width="0.7"/><path d="M147.4 176.2h1.4" stroke="#999" stroke-width="0.7"/><path d="M147.4 186.8h1.4" stroke="#999" stroke-width="0.7"/><path d="M147.4 197.4h1.4" stroke="#999" stroke-width="0.7"/><path d="M147.4 208.0h1.4" stroke="#999" stroke-width="0.7"/><path d="M147.4 218.6h1.4" stroke="#999" stroke-width="0.7"/><path d="M147.4 229.2h1.4" stroke="#999" stroke-width="0.7"/><path d="M147.4 239.8h1.4" stroke="#999" stroke-width="0.7"/><path d="M147.4 250.4h1.4" stroke="#999" stroke-width="0.7"/><path d="M147.4 261.0h1.4" stroke="#999" stroke-width="0.7"/><path d="M147.4 271.6h1.4" stroke="#999" stroke-width="0.7"/><path d="M147.4 282.2h1.4" stroke="#999" stroke-width="0.7"/><path d="M147.4 292.8h1.4" stroke="#999" stroke-width="0.7"/><path d="M147.4 303.4h1.4" stroke="#999" stroke-width="0.7"/><path d="M147.4 314.0h1.4" stroke="#999" stroke-width="0.7"/><path d="M147.4 324.6h1.4" stroke="#999" stroke-width="0.7"/><path d="M147.4 335.2h1.4" stroke="#999" stroke-width="0.7"/><path d="M147.4 345.8h1.4" stroke="#999" stroke-width="0.7"/><path d="M137 343.2h2.6v5.4h-2.6zM137.8 344.6h1" stroke="#333" stroke-width="0.7" fill="none"/></g></svg>
<div class="abs" style="left:4.2px;top:364.4px;width:122px;height:7.6px;background:#f1f1f1;"></div>
<div class="abs" style="left:13.0px;top:365.0px;width:68px;height:6.4px;background:#c9c9c9;"></div>
<div class="r" style="left:6.4px;top:364.2px;font-size:5px;color:#555;">&lt;</div>
<div class="r" style="left:120.0px;top:364.2px;font-size:5px;color:#555;">&gt;</div>
<div class="r" style="left:15.600px;top:379.9px;font-size:7.200px;color:#2c7a8d;">Search</div>
<div class="abs" style="left:8.4px;top:380.8px;width:0;height:0;border-left:3.400px solid #2c7a8d;border-top:2.600px solid transparent;border-bottom:2.600px solid transparent;"></div>
<div class="r" style="left:15.600px;top:392.9px;font-size:7.200px;color:#2c7a8d;">Dependencies</div>
<div class="abs" style="left:8.4px;top:393.8px;width:0;height:0;border-left:3.400px solid #2c7a8d;border-top:2.600px solid transparent;border-bottom:2.600px solid transparent;"></div>
<div class="r" style="left:15.600px;top:405.4px;font-size:7.200px;color:#2c7a8d;">Details</div>
<div class="abs" style="left:8.4px;top:406.3px;width:0;height:0;border-left:3.400px solid #2c7a8d;border-top:2.600px solid transparent;border-bottom:2.600px solid transparent;"></div>
<div class="r" style="left:15.600px;top:418.2px;font-size:7.200px;color:#2c7a8d;">Preview</div>
<div class="abs" style="left:8.4px;top:419.1px;width:0;height:0;border-left:3.400px solid #2c7a8d;border-top:2.600px solid transparent;border-bottom:2.600px solid transparent;"></div>
<div class="abs" style="left:3.6px;top:389.6px;width:124px;height:1px;background:#c9cccd;"></div>
<div class="abs" style="left:3.6px;top:401.8px;width:124px;height:1px;background:#c9cccd;"></div>
<div class="abs" style="left:3.6px;top:414.6px;width:124px;height:1px;background:#c9cccd;"></div>
<div class="abs" style="left:3.6px;top:427.4px;width:124px;height:1px;background:#c9cccd;"></div>
<!--/NAV-->
</div>
<div id="gap" class="abs"></div>

<!-- TABS -->
<div id="tabs" class="abs" style="left:154px;top:123px;width:870px;height:14px;">
<svg class="abs" style="left:3px;top:2px" width="9" height="9" viewBox="0 0 9 9"><path d="M1 7.500v-5h2.500M3.500 7.500h4v-6h-4zM5 3h1.500M5 4.600h1.500M1 7.500h2.500" fill="none" stroke="#333" stroke-width="0.800"/></svg>
<div class="abs" style="left:14.500px;top:3px;font-size:6.400px;line-height:8px;color:#222;white-space:nowrap;">Discovery Center</div>
<div class="abs" style="left:73.300px;top:0.300px;width:59.500px;height:13px;background:#107c9a;"></div>
<svg class="abs" style="left:77px;top:2px" width="9" height="9" viewBox="0 0 9 9"><path d="M1 1.500h7v5.500h-7zM1 3h7" fill="none" stroke="#fff" stroke-width="0.900"/><path d="M3 4.500h3v1.500h-3z" fill="#fff"/></svg>
<div class="abs" style="left:87.600px;top:2.400px;font-size:6.200px;font-weight:bold;line-height:8px;color:#fff;white-space:nowrap;">Dims.prt</div>
<svg class="abs" style="left:115px;top:2.800px" width="16" height="8" viewBox="0 0 16 8"><path d="M1 1h4v5.500h-4zM2 2.500h2v2.500h-2z" fill="none" stroke="#fff" stroke-width="0.800"/><path d="M9.500 1.500l4 4.500M13.500 1.500l-4 4.500" stroke="#fff" stroke-width="1.100"/></svg>
</div>
<!-- cursor -->
<svg class="abs" style="left:206px;top:133px" width="16" height="16" viewBox="0 0 16 16"><path d="M8.200 0.500v14.700" stroke="#000" stroke-width="1.900"/><path d="M0.400 8.200h15.300" stroke="#000" stroke-width="1.900"/><path d="M4.500 4.500l1 1M12 4.500l-1 1M4.500 12l1-1M12 12l-1-1" stroke="#000" stroke-width="0.800" stroke-dasharray="0.800 0.800"/></svg>
<div class="abs" style="left:157px;top:543.500px;font-size:6.300px;line-height:8px;color:#222;white-space:nowrap;">Sheet "Sheet 1" Work</div>
<!-- GRAPHICS -->
<svg id="gfx" class="abs" style="left:154px;top:123px;" width="870" height="431" viewBox="154 123 870 431" font-family="Liberation Sans, sans-serif">
<!--GFX-->
<!-- top teal line of graphics window -->
<line x1="154" y1="136.5" x2="999" y2="136.5" stroke="#2b7f93" stroke-width="1"/>
<!-- sheet dashed boundary -->
<g stroke="#444" stroke-width="0.700" stroke-dasharray="4.400 4.200" stroke-dashoffset="-1.200" fill="none">
<line x1="303" y1="141.6" x2="851" y2="141.6"/>
<line x1="303" y1="548.2" x2="851" y2="548.2"/>
<line x1="864.4" y1="156" x2="864.4" y2="534"/>
</g>
<!-- corner markers -->
<g fill="#000">
<path d="M288.6 141.2H303V148.3H296V155.8H288.6Z"/>
<path d="M864.8 141.2H850.2V148.3H857.5V155.8H864.8Z"/>
<path d="M288.6 548.6H303V541.5H296V534H288.6Z"/>
<path d="M864.8 548.6H850.2V541.5H857.5V534H864.8Z"/>
</g>
<!-- frame -->
<g stroke="#000" stroke-width="1" fill="none">
<line x1="296" y1="148.3" x2="858" y2="148.3"/>
<line x1="296" y1="541.5" x2="858" y2="541.5"/>
<line x1="857.5" y1="148" x2="857.5" y2="542"/>
<rect x="302.6" y="155.5" width="548.3" height="378.8"/>
</g>
<!-- zone ticks -->
<g stroke="#555" stroke-width="0.7">
<line x1="371.2" y1="148.5" x2="371.2" y2="155.5"/><line x1="439.7" y1="148.5" x2="439.7" y2="155.5"/><line x1="508.2" y1="148.5" x2="508.2" y2="155.5"/><line x1="645.2" y1="148.5" x2="645.2" y2="155.5"/><line x1="713.7" y1="148.5" x2="713.7" y2="155.5"/><line x1="782.2" y1="148.5" x2="782.2" y2="155.5"/>
<line x1="371.2" y1="534.5" x2="371.2" y2="541.5"/><line x1="439.7" y1="534.5" x2="439.7" y2="541.5"/><line x1="508.2" y1="534.5" x2="508.2" y2="541.5"/><line x1="645.2" y1="534.5" x2="645.2" y2="541.5"/><line x1="713.7" y1="534.5" x2="713.7" y2="541.5"/><line x1="782.2" y1="534.5" x2="782.2" y2="541.5"/>
<line x1="296" y1="208.3" x2="302.6" y2="208.3"/><line x1="296" y1="276.8" x2="302.6" y2="276.8"/><line x1="296" y1="413.8" x2="302.6" y2="413.8"/><line x1="296" y1="482.3" x2="302.6" y2="482.3"/>
<line x1="851" y1="208.3" x2="857.5" y2="208.3"/><line x1="851" y1="276.8" x2="857.5" y2="276.8"/><line x1="851" y1="413.8" x2="857.5" y2="413.8"/><line x1="851" y1="482.3" x2="857.5" y2="482.3"/>
</g>
<!-- centre marks -->
<g stroke="#000" stroke-width="1" fill="none">
<line x1="576.7" y1="148" x2="576.7" y2="162"/>
<line x1="576.7" y1="527" x2="576.7" y2="541.5"/>
<line x1="296" y1="345.3" x2="310.5" y2="345.3"/>
<line x1="844" y1="345.3" x2="857.5" y2="345.3"/>
<path d="M306.5 340.5L299.5 345.3L306.5 350.3Z" stroke-width="0.8"/>
<path d="M572.5 529.5H581L576.7 537Z" stroke-width="0.8"/>
</g>
<!-- zone labels -->
<g font-size="5" fill="#666" text-anchor="middle">
<text x="333.500" y="154">1</text><text x="405.5" y="154">2</text><text x="474" y="154">3</text><text x="542.5" y="154">4</text><text x="611" y="154">5</text><text x="679.5" y="154">6</text><text x="748" y="154">7</text><text x="819.600" y="154">8</text>
<text x="333.500" y="540">1</text><text x="405.5" y="540">2</text><text x="474" y="540">3</text><text x="542.5" y="540">4</text><text x="611" y="540">5</text><text x="679.5" y="540">6</text><text x="748" y="540">7</text><text x="820" y="540">A3</text>
<text x="299" y="180.5">A</text><text x="299" y="244.5">B</text><text x="299" y="312.5">C</text><text x="299" y="380.5">D</text><text x="299" y="449.5">E</text><text x="299" y="513">F</text>
<text x="854.3" y="180.5" transform="rotate(90 854.3 178.7)">A</text><text x="854.3" y="244.5" transform="rotate(90 854.3 242.7)">B</text><text x="854.3" y="312.5" transform="rotate(90 854.3 310.7)">C</text><text x="854.3" y="380.5" transform="rotate(90 854.3 378.7)">D</text><text x="854.3" y="449.5" transform="rotate(90 854.3 447.7)">E</text><text x="854.3" y="513" transform="rotate(90 854.3 511.2)">F</text>
</g>

<!-- VIEW 1 : front -->
<rect x="354.5" y="197.5" width="120" height="132.6" fill="none" stroke="#555" stroke-width="0.8"/>
<g fill="none" stroke="#aaa" stroke-width="0.6">
<path d="M366.6 321V296.5L384.3 231A31.5 31.5 0 0 1 445.3 231L463 296.5V321"/>
<line x1="390" y1="240" x2="439" y2="240"/><line x1="414.7" y1="215.5" x2="414.7" y2="264.5"/>
</g>
<g fill="none" stroke="#000" stroke-width="0.9">
<path d="M363.2 321.3V294.5L381.9 230.3A34 34 0 0 1 447.6 230.3L466.3 294.5V321.3"/>
<path d="M363.2 294.5l1.5 2.2M466.3 294.5l-1.5 2.2" stroke-width="0.7"/>
<line x1="362.7" y1="321.4" x2="466.8" y2="321.4" stroke-width="1.5"/>
<circle cx="414.7" cy="240" r="17.8" stroke-width="1.3"/>
</g>

<!-- VIEW 2 : side with section line -->
<g fill="none" stroke="#777" stroke-width="0.6">
<line x1="517" y1="197.2" x2="588.6" y2="197.2"/><line x1="517" y1="330.5" x2="588.6" y2="330.5"/>
<line x1="553.4" y1="198" x2="553.4" y2="330" stroke-dasharray="5 2" stroke="#999"/>
<circle cx="568" cy="309.8" r="18.9" stroke="#888"/>
</g>
<g fill="none" stroke="#aaa" stroke-width="0.6">
<line x1="529.200" y1="206" x2="529.200" y2="321"/><line x1="536.400" y1="206" x2="536.400" y2="305.500"/>
<line x1="570.400" y1="206" x2="570.400" y2="305.500"/><line x1="577.400" y1="206" x2="577.400" y2="321"/>
<path d="M536.400 305.500Q537 310.500 542.600 311.500V308.400M570.400 305.500Q569.800 310.500 564 311.500V308.400"/>
</g>
<g fill="none" stroke="#000" stroke-width="0.9">
<path d="M525.5 321.5V208.5Q525.5 204.800 529 204.800H536Q539.300 204.800 539.300 208.500V305.800Q539.300 308.400 542 308.400H564.200Q566.900 308.400 566.900 305.800V208.500Q566.900 204.800 570.300 204.800H577Q580.500 204.800 580.500 208.500V321.500"/>
<line x1="525" y1="321.500" x2="581" y2="321.500" stroke-width="1.400"/>
<line x1="525.500" y1="230.600" x2="539.300" y2="230.600"/><line x1="566.900" y1="230.600" x2="580.500" y2="230.600"/>
<line x1="525.500" y1="295.200" x2="539.300" y2="295.200"/><line x1="566.900" y1="295.200" x2="580.500" y2="295.200"/>
<line x1="553.4" y1="181" x2="553.4" y2="197.2" stroke-width="1.2"/><line x1="553.4" y1="330.5" x2="553.4" y2="346.7" stroke-width="1.2"/>
<line x1="518.7" y1="189.3" x2="546" y2="189.3" stroke-width="0.6" stroke="#444"/><line x1="518.7" y1="339.2" x2="546" y2="339.2" stroke-width="0.6" stroke="#444"/>
</g>
<path d="M543.6 187.4L552 189.3L543.6 191.2Z" fill="#000"/><path d="M543.6 337.3L552 339.2L543.6 341.1Z" fill="#000"/>
<text x="503.4" y="193.8" font-size="12.4" fill="#222" text-anchor="middle">A</text>
<text x="503.4" y="343.6" font-size="12.4" fill="#222" text-anchor="middle">A</text>
<text x="603" y="334.8" font-size="7" fill="#333" text-anchor="middle">B</text>

<!-- VIEW 3 : section A-A -->
<g fill="none" stroke="#777" stroke-width="0.6">
<line x1="617.2" y1="197.2" x2="736.8" y2="197.2"/><line x1="617.2" y1="330.5" x2="736.8" y2="330.5"/>
</g>
<g fill="none" stroke="#aaa" stroke-width="0.6">
<path d="M628.600 308V296L646.400 231A31.500 31.500 0 0 1 707.400 231L725 296V308"/>
<line x1="652.4" y1="239.8" x2="701.2" y2="239.8"/><line x1="676.8" y1="215" x2="676.8" y2="266"/>
<line x1="628" y1="305.200" x2="726" y2="305.200"/>
</g>
<g stroke="#222" stroke-width="0.600"><path d="M625.3 311.6L628.1 308.5M625.9 321.9L637.7 308.5M635.5 321.9L647.3 308.5M645.2 321.9L657.0 308.5M654.8 321.9L666.6 308.5M664.5 321.9L676.3 308.5M674.1 321.9L685.9 308.5M683.7 321.9L695.5 308.5M693.4 321.9L705.2 308.5M703.0 321.9L714.8 308.5M712.7 321.9L724.5 308.5M722.3 321.9L728.4 315.0"/></g>
<g fill="none" stroke="#000" stroke-width="0.9">
<path d="M625.2 322V293.8L644 230.3A34 34 0 0 1 709.6 230.3L728.2 293.8V322"/>
<path d="M625.2 293.8l1.5 2.2M728.2 293.8l-1.5 2.2" stroke-width="0.7"/>
<line x1="624.8" y1="322.2" x2="728.6" y2="322.2" stroke-width="1.3"/>
<line x1="625.200" y1="308.400" x2="728.200" y2="308.400" stroke-width="0.900"/>
<circle cx="676.8" cy="239.8" r="17.2" stroke-width="1.3"/>
</g>
<text x="654" y="346.300" font-size="6.600" fill="#a0a0a0">SECTION <tspan font-size="8.800" fill="#666">A-A</tspan></text>

<!-- VIEW 4 : top -->
<g fill="none" stroke="#555" stroke-width="0.7">
<line x1="354.4" y1="363" x2="354.4" y2="434.8"/><line x1="474.4" y1="363" x2="474.4" y2="434.8"/>
</g>
<g fill="none" stroke="#999" stroke-width="0.6">
<line x1="363.5" y1="374" x2="465.5" y2="374"/><line x1="363.5" y1="381.6" x2="465.5" y2="381.6"/>
<line x1="363.5" y1="416.4" x2="465.5" y2="416.4"/><line x1="363.5" y1="423.4" x2="465.5" y2="423.4"/>
<line x1="363.2" y1="385" x2="363.2" y2="413"/><line x1="366.2" y1="388" x2="366.2" y2="410"/><line x1="465.7" y1="385" x2="465.7" y2="413"/>
</g>
<g fill="none" stroke="#000" stroke-width="0.9">
<rect x="362.7" y="371.2" width="103.5" height="14" rx="3.2" ry="3.2"/>
<rect x="362.7" y="412.4" width="103.5" height="14" rx="3.2" ry="3.2"/>
<path d="M381.7 372V384.5M447.3 372V384.5M381.7 413V425.5M447.3 413V425.5" stroke-width="0.7"/>
<line x1="363" y1="388" x2="462.5" y2="388" stroke="#444" stroke-width="0.7"/><line x1="363" y1="409.7" x2="462.5" y2="409.7" stroke="#444" stroke-width="0.7"/>
<line x1="462.5" y1="385.5" x2="462.5" y2="412.2" stroke-width="0.8"/>
</g>

<!-- DETAIL B -->
<circle cx="552.9" cy="398.9" r="39" fill="none" stroke="#777" stroke-width="0.6"/>
<g fill="none" stroke="#aaa" stroke-width="0.6">
<line x1="550.4" y1="367" x2="577.5" y2="367"/><line x1="571.2" y1="367" x2="571.2" y2="421.5"/><line x1="522" y1="421.6" x2="577" y2="421.6"/>
</g>
<g fill="none" stroke="#333" stroke-width="0.8">
<path d="M550.4 360V389.5A6.4 6.4 0 0 1 544 396H514"/>
<path d="M550.4 389.5H556.7A12.7 12.7 0 0 1 544 402.3V396"/>
<line x1="550.4" y1="368.3" x2="578" y2="368.3" stroke-width="0.7"/>
<line x1="577.5" y1="368" x2="577.5" y2="423.6" stroke="#000" stroke-width="1.1"/>
<line x1="522.5" y1="423.2" x2="578" y2="423.2" stroke="#000" stroke-width="1.2"/>
</g>
<text x="537.900" y="455.800" font-size="6.200" fill="#a0a0a0">DETAIL <tspan font-size="8.800" fill="#777">B</tspan></text>
<text x="531" y="466.600" font-size="8.800" fill="#333">SCALE <tspan fill="#8a8a8a">1:1</tspan></text>

<!-- projection symbol -->
<g fill="none" stroke="#000" stroke-width="0.8">
<line x1="304.8" y1="521.4" x2="338" y2="521.4" stroke-dasharray="9 1.5 3 1.5"/>
<line x1="346" y1="521.4" x2="368.5" y2="521.4" stroke-dasharray="7 1.5 2.5 1.5"/>
<path d="M312 515.8L330.4 514V528.8L312 526.8Z" stroke-width="0.6" stroke-dasharray="3 1.2" stroke="#333"/>
<circle cx="357" cy="521.4" r="7.2" stroke-width="0.6" stroke-dasharray="4 1.2" stroke="#333"/>
<circle cx="357" cy="521.4" r="4.6" stroke-width="0.6" stroke-dasharray="3 1.2" stroke="#333"/>
</g>
<!--TB-->
<!-- TITLE BLOCK -->
<g fill="none" stroke="#8a8a8a" stroke-width="0.9">
<line x1="686" y1="486.500" x2="686" y2="534.300"/>
<line x1="686" y1="503.100" x2="788.300" y2="503.100"/>
<line x1="788.300" y1="486.500" x2="788.300" y2="534.300" stroke="#444"/>
</g>
<g fill="none" stroke="#000" stroke-width="0.9">
<rect x="631.400" y="486.500" width="219.300" height="47.800"/>
<line x1="823.400" y1="486.500" x2="823.400" y2="534.300"/>
<line x1="788.300" y1="503.200" x2="850.700" y2="503.200"/>
<line x1="788.300" y1="518.600" x2="850.700" y2="518.600"/>
</g>
<rect x="636.100" y="491.100" width="8.700" height="7.700" rx="1" fill="#1c5f9e"/>
<rect x="638.100" y="492.900" width="4.900" height="4.100" rx="0.600" fill="#eef3f8"/>
<rect x="639.900" y="493.900" width="1.300" height="2.100" fill="#1c5f9e"/>
<text x="648" y="498.900" font-family="Liberation Serif, serif" font-size="11.600" fill="#333" textLength="33.400" lengthAdjust="spacingAndGlyphs">NTNU</text>
<g font-size="5.500" fill="#4a4a4a" text-anchor="middle">
<text x="659" y="510.100">NTNU Aalesund</text>
<text x="659" y="517.200" fill="#999">Larsgaardsvegen 2</text>
<text x="659" y="524.800">6009 Aalesund</text>
<text x="659.300" y="532.200">Norway</text>
</g>
<g font-size="3.500" fill="#666">
<text x="687.700" y="493.300" textLength="97.400" lengthAdjust="spacingAndGlyphs">This drawing is the property of NTNU Aalesund. The contents are not</text>
<text x="687.700" y="499.500" textLength="97.400" lengthAdjust="spacingAndGlyphs">permitted to be copied to others, nor without written consent.</text>
</g>
<g font-size="4" fill="#8a8a8a">
<text x="687.700" y="507.300" font-size="3.600" textLength="48.700" lengthAdjust="spacingAndGlyphs">Title / Supplementary Title / Name</text>
<text x="790.200" y="491">Drawn By</text>
<text x="825.200" y="491">Date</text>
<text x="790.200" y="507.400">Sheet</text>
<text x="825.200" y="507.400">Scale</text>
<text x="790.200" y="523">Part Doc ID No</text>
<text x="825.200" y="523">Revision</text>
</g>
<g font-size="6.500" fill="#444">
<text x="688.900" y="516.200" fill="#777">TEST</text>
<text x="688.900" y="529.100">TEST PART</text>
<text x="806.600" y="500.100" text-anchor="middle" fill="#888" font-size="6.300">PAUL</text>
<text x="826.200" y="500" font-size="5.200" fill="#777" textLength="23.800" lengthAdjust="spacingAndGlyphs">08.03.2022</text>
<text x="806.200" y="516.100" text-anchor="middle" font-size="6.300">A3 - 1 of 1</text>
<text x="837.600" y="516.100" text-anchor="middle" font-size="6.300">1:2</text>
<text x="806.200" y="531.900" text-anchor="middle" font-size="6.700" fill="#777">000001</text>
<text x="837.700" y="531.900" text-anchor="middle" font-size="6.500" fill="#777">A</text>
</g>
<!--/TB-->
<!--RT-->
<!-- RIGHT TOOLBAR -->
<line x1="999.300" y1="137" x2="999.300" y2="554" stroke="#d4d7d9" stroke-width="0.800"/>
<path d="M1003.500 549.500l2.400-1.800v3.600z" fill="#333"/>
<g fill="none" stroke-width="0.800">
<path d="M1003.500 140.500h14.500M1003.500 138v5M1016.500 139l1.500 1.500-1.500 1.500" stroke="#d9933d"/><path d="M1011.500 135h3.500l-2 3.500h2.500l-6 6.500 2-5h-2z" fill="#ecc12e" stroke="#d9a11e" stroke-width="0.400"/>
<path d="M1003 153v6M1018.500 153v6M1003 156l2-1.500M1003 156l2 1.500M1018.500 156l-2-1.500M1018.500 156l-2 1.500" stroke="#222" stroke-width="0.900"/><path d="M1010 168l5-5.500c-.5-2 1-3.500 3-3l-1.500 1.800 1.200 1.200 1.800-1.500c.5 2-1 3.500-3 3l-5 5.500z" stroke="#444" stroke-width="0.600"/>
<path d="M1003.500 184.300h14.500M1003.500 181.500v5.500M1018 181.500v5.500M1005.200 183l-1.500 1.300 1.500 1.300M1016.300 183l1.500 1.300-1.500 1.300M1010 180l2 2M1012 180l-2 2" stroke="#d9933d"/><path d="M1003.500 188.700h14.500" stroke="#2f8fa6" stroke-width="0.900"/>
<path d="M1003.500 205l7.500-6.500 4.500 4-7 7zM1007 202l4.500 4" stroke="#e0a25c"/><path d="M1010 211v-4l3.500-3h4.500v7z" stroke="#2f8fa6" fill="#eef8fa"/>
<rect x="1003" y="220.500" width="12.500" height="12.500" stroke="#c99a4a" fill="#fbf7ef"/><path d="M1004.500 229c0-5 2-7.500 5.500-8v6l5 3-4.500 3z" fill="#8e8e8e" stroke="#555" stroke-width="0.500"/>
<rect x="1004" y="245" width="13.500" height="10.500" stroke="#d9933d" fill="#f5dcae"/><path d="M1008.500 245v10.500M1013 245v10.500" stroke="#d9933d" stroke-width="2.200" stroke-dasharray="1 1"/><path d="M1009.500 245v10.500h2.500v-10.500" stroke="#6fc3d4" fill="#fefefe"/>
<path d="M1003.500 265v17h15.500" stroke="#222" stroke-width="0.900"/><path d="M1006 270l3.500 3M1016.500 270l-3.500 3M1006 280l3.500-3M1016.500 280l-3.500-3M1006 272v-2h2M1014.500 270h2v2M1006 278v2h2M1014.500 280h2v-2" stroke="#333" stroke-width="0.700"/>
<path d="M1003.500 288.500v10" stroke="#333"/><rect x="1006" y="288.500" width="11.500" height="8" fill="#e6e6e6" stroke="none"/><path d="M1005.500 291.500h12.500" stroke="#333"/><path d="M1017.500 288.500v5" stroke="#999"/>
</g>
<circle cx="1014.500" cy="298.300" r="3.900" fill="#fefefe" stroke="#222" stroke-width="0.800"/><text x="1014.500" y="300.400" font-size="5.400" text-anchor="middle" fill="#222">1</text>
<circle cx="1016" cy="233.500" r="3.900" fill="#fefefe" stroke="#222" stroke-width="0.800"/><path d="M1013.800 233.500h4.400M1016 231.300v4.400" stroke="#222" stroke-width="0.800"/>
<text x="1010" y="324.500" font-size="19" font-family="Liberation Serif, serif" fill="#dc8a35" text-anchor="middle">A</text>
<path d="M1018.500 318l-6 6" stroke="#222" stroke-width="1.100"/><path d="M1013 323l-2.500 1.500-1.500 2.500 3-1 1.800-2z" fill="#e8c23a" stroke="#7a8fb8" stroke-width="0.400"/>
<g fill="none" stroke="#2f8fa6" stroke-width="0.800"><rect x="1003.500" y="333" width="13" height="5.500" fill="#f3fbfc"/><rect x="1003.500" y="340.500" width="13" height="3.500" fill="#f3fbfc"/><circle cx="1010" cy="335.800" r="1.700"/></g>
<circle cx="1016" cy="343.500" r="3.500" fill="#fefefe" stroke="#333" stroke-width="0.700" stroke-dasharray="5 2"/>
<!--/RT-->
<!--/GFX-->
</svg>

<!-- TASKBAR -->
<div class="abs" style="left:0;top:553px;width:1024px;height:1px;background:#77787a;"></div>
<div id="task" class="abs">
  <div class="abs" style="left:25px;top:0;width:184px;height:22px;background:#f2f2f2;border-top:1px solid #b9b9b9;box-sizing:border-box;"></div>
  <div class="abs" style="left:459.500px;top:0;width:83.500px;height:22px;background:#363b40;"></div>
  <div class="abs" style="left:238px;top:20.500px;width:81px;height:1.500px;background:#76b9ed;"></div>
  <div class="abs" style="left:376px;top:20.500px;width:80px;height:1.500px;background:#76b9ed;"></div>
  <div class="abs" style="left:459.500px;top:20.500px;width:83.500px;height:1.500px;background:#76b9ed;"></div>
  <div class="t" style="left:46.400px;top:6.600px;font-size:7.700px;color:#3c3c3c;">Type here to search</div>
  <div class="t" style="left:256.300px;top:6.800px;font-size:6px;">Siemens</div>
  <div class="t" style="left:395px;top:6.800px;font-size:6px;">Router</div>
  <div class="t" style="left:479.500px;top:6.600px;font-size:6.600px;">NXcustom - Drafting</div>
  <div class="t" style="left:969.500px;top:7px;font-size:5.200px;">NOB</div>
  <div class="t" style="left:989px;top:1.800px;width:29px;text-align:center;font-size:5.400px;">09:16</div>
  <div class="t" style="left:989px;top:11.600px;width:29px;text-align:center;font-size:5.400px;">02.03.2022</div>
  <svg class="abs" style="left:0;top:0" width="1024" height="22" viewBox="0 554 1024 22" font-family="Liberation Sans, sans-serif">
   <path d="M7.800 562.200l3.600-.6v3.300h-3.600zM12 561.500l5.200-.8v4.200h-5.200zM7.800 565.500h3.600v3.300l-3.600-.6zM12 565.500h5.200v4.200l-5.200-.8z" fill="#fff"/>
   <circle cx="37.200" cy="563.400" r="2.700" fill="none" stroke="#333" stroke-width="0.900"/><path d="M35.200 565.400l-3.200 3.200" stroke="#333" stroke-width="0.900"/>
   <path d="M217.500 561.500v6.500M217.500 561.500h1.500M217.500 568h1.500M220.500 562h3v5.500h-3zM225 563.500v1.500" fill="none" stroke="#fff" stroke-width="0.900"/>
   <path d="M243 560h3l1 1h2.500v8h-6.500z" fill="#f5c84a"/><path d="M243 562h6.500v7h-6.500z" fill="#f9d978"/>
   <circle cx="334.300" cy="565" r="5.200" fill="#2a7fd0"/><path d="M329.500 566.500c0-4 3-6.500 6.500-6 2.500.5 3.800 2.500 3.500 4.500h-6c0 2 2 3.500 5 2.500-1.500 2.500-5 3.500-7.500 1.500z" fill="#49c5b3"/><circle cx="333.500" cy="566" r="1.700" fill="#1b5fa8"/>
   <rect x="357" y="560.500" width="8" height="9" rx="1" fill="#1f78d1"/><rect x="355.200" y="562" width="5.500" height="6" rx="0.800" fill="#0f5fb0"/><circle cx="358" cy="565" r="1.600" fill="none" stroke="#fff" stroke-width="0.800"/><path d="M361.500 563h3l-1.500 2z" fill="#9fd0f5"/>
   <rect x="379.800" y="559.700" width="10" height="10" fill="#b3202a"/><text x="380.600" y="567.600" font-size="6.200" font-weight="bold" fill="#fff" textLength="8.400" lengthAdjust="spacingAndGlyphs">NX</text>
   <rect x="465.800" y="559.700" width="10" height="10" fill="#b3202a"/><text x="466.600" y="567.600" font-size="6.200" font-weight="bold" fill="#fff" textLength="8.400" lengthAdjust="spacingAndGlyphs">NX</text>
   <path d="M931.500 566l3-3 3 3" fill="none" stroke="#e8e8e8" stroke-width="0.800"/>
   <path d="M944.500 562h5v4h-5zM947 566v1.800M945 568h4M950.500 568v-3h1.500v3" fill="none" stroke="#e8e8e8" stroke-width="0.800"/>
   <path d="M957.500 564h1.500l2-2v6l-2-2h-1.500z" fill="#e8e8e8"/><path d="M962.300 563c1 1 1 3 0 4M963.800 562c1.600 1.800 1.600 4.400 0 6" fill="none" stroke="#e8e8e8" stroke-width="0.600"/>
   <path d="M1021.500 554v22" stroke="#555" stroke-width="0.600"/>
  </svg>
</div>
</body>
</html>
